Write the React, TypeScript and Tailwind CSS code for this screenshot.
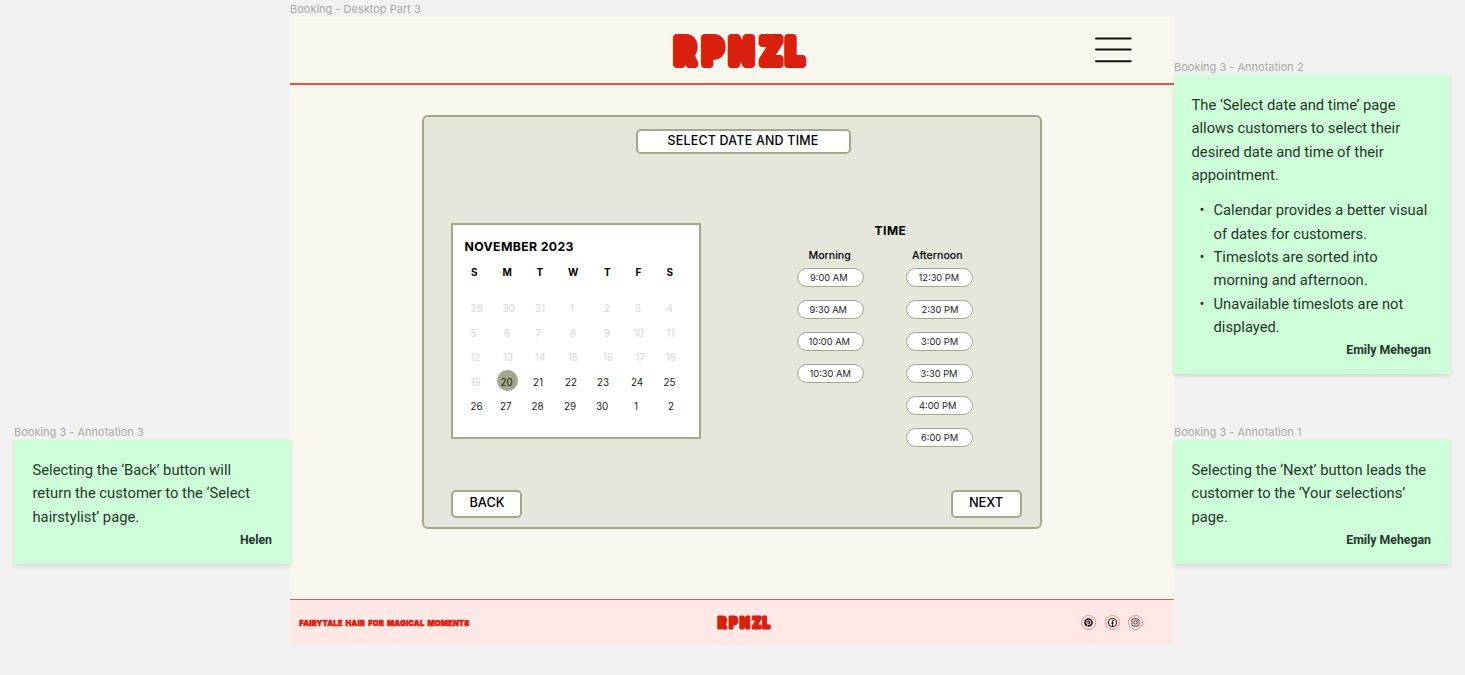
import React from "react";
import { FaPinterest, FaInstagram } from "react-icons/fa";
import { RiFacebookCircleLine } from "react-icons/ri";

type Cell = [text: string, inset: number];

const weekdays: Cell[] = [["S", 3], ["M", 2.5], ["T", 4.5], ["W", 4], ["T", 8], ["F", 7.5], ["S", 6.5]];

const weeks: Cell[][] = [
  [["29", 3], ["30", 3], ["31", 3.5], ["1", 6], ["2", 8.5], ["3", 7.5], ["4", 7]],
  [["5", 3], ["6", 4.5], ["7", 4], ["8", 6.5], ["9", 8.5], ["10", 6], ["11", 7]],
  [["12", 3], ["13", 3.5], ["14", 3.5], ["15", 4.5], ["16", 7.5], ["17", 8], ["18", 6]],
  [["19", 3], ["20", 1], ["21", 1.5], ["22", 1.5], ["23", 1.5], ["24", 3.5], ["25", 4]],
  [["26", 3], ["27", 0.5], ["28", 0], ["29", 0.5], ["30", 0.5], ["1", 6.5], ["2", 8.5]],
];

const morning: Cell[] = [["9:00 AM", 12], ["9:30 AM", 11.5], ["10:00 AM", 10.5], ["10:30 AM", 11.5]];
const afternoon: Cell[] = [["12:30 PM", 11.5], ["2:30 PM", 14.5], ["3:00 PM", 14], ["3:30 PM", 13.5], ["4:00 PM", 12], ["6:00 PM", 14]];

function Logo({ className }: { className: string }) {
  return (
    <svg viewBox="0 0 136 36" className={className} aria-label="RPNZL">
      <g transform="scale(0.88 1)">
        <text
          x="3 35 65.3 100.5 129.5"
          y="30.9"
          fontFamily="Inter, sans-serif"
          fontWeight="800"
          fontSize="35.5"
          fill="#d9200f"
          stroke="#d9200f"
          strokeWidth="8"
          strokeLinejoin="round"
        >
          RPNZL
        </text>
      </g>
    </svg>
  );
}

function FrameLabel({ children }: { children: React.ReactNode }) {
  return <div className="h-[17px] pt-px text-[11px] leading-[17px] whitespace-nowrap text-[#a9a9a9]">{children}</div>;
}

function Note({ label, author, className, children }: { label: string; author: string; className: string; children: React.ReactNode }) {
  return (
    <div className="relative">
      <FrameLabel>{label}</FrameLabel>
      <div className={`flex flex-col bg-[#cdffd8] pt-[19px] pr-[19px] font-['Roboto',sans-serif] text-[14.75px] leading-[23.35px] whitespace-nowrap text-[#2b332d] shadow-[0_2px_4px_rgba(0,0,0,0.13)] ${className}`}>
        {children}
        <div className="text-right text-[12.3px] font-bold">{author}</div>
      </div>
    </div>
  );
}

function SlotColumn({ title, slots, titleClass }: { title: string; slots: Cell[]; titleClass: string }) {
  return (
    <div className="w-[67px]">
      <div className={`h-[20px] text-[10.6px] leading-[14px] font-medium whitespace-nowrap ${titleClass}`}>{title}</div>
      <div className="flex flex-col gap-[13px]">
        {slots.map(([time, inset]) => (
          <div
            key={time}
            className="flex h-[19px] items-center rounded-full border-[1.5px] border-[#a3a88a] bg-white text-[9.3px] leading-none whitespace-nowrap text-[#222]"
            style={{ paddingLeft: inset }}
          >
            {time}
          </div>
        ))}
      </div>
    </div>
  );
}

function Calendar() {
  return (
    <div className="h-[216px] w-[250px] border-2 border-[#a3a88a] bg-white pl-[11px]">
      <div className="pt-[13px] pl-[0.5px] text-[12.3px] leading-[18px] font-bold tracking-[0.35px]">NOVEMBER 2023</div>
      <div className="grid grid-cols-[repeat(7,32px)] pt-[9px] pl-1 text-[10px] leading-[14px] font-bold">
        {weekdays.map(([d, inset], i) => (
          <div key={i} style={{ paddingLeft: inset }}>{d}</div>
        ))}
      </div>
      <div className="grid grid-cols-[repeat(7,32px)] pt-[18px] pl-[3.5px] text-[9.8px] leading-[24.5px]">
        {weeks.flatMap((week, w) =>
          week.map(([d, inset], i) => {
            const past = w < 3 || (w === 3 && i === 0);
            const selected = d === "20";
            return (
              <div key={`${w}-${i}`} className={`relative ${past ? "text-[#d6d6d6]" : "text-[#1c1c1c]"}`} style={{ paddingLeft: inset }}>
                {selected && <span className="absolute -top-px -left-[2.5px] size-[21px] rounded-full bg-[#a3a88a]" />}
                <span className="relative">{d}</span>
              </div>
            );
          }),
        )}
      </div>
    </div>
  );
}

function SocialIcon({ children }: { children: React.ReactNode }) {
  return <span className="flex size-[15px] items-center justify-center rounded-full border-[1.5px] border-[#f0897c] text-[#111]">{children}</span>;
}

export default function App() {
  return (
    <div className="grid h-[675px] w-[1465px] grid-cols-[290px_884px_291px] overflow-hidden bg-[#f2f2f2] font-['Inter',sans-serif] text-black">
      <aside className="relative z-10 pt-[423px] pl-[14px]">
        <Note label="Booking 3 - Annotation 3" author="Helen" className="h-[124px] w-[277px] pl-[18.5px]">
          <p>Selecting the ‘Back’ button will<br />return the customer to the ‘Select<br />hairstylist’ page.</p>
        </Note>
      </aside>

      <div>
        <FrameLabel>Booking - Desktop Part 3</FrameLabel>
        <div className="flex h-[628px] flex-col bg-[#faf7ee]">
          <header className="flex h-[68px] items-start justify-between border-b-2 border-[#e2553f] pr-[42px] pl-[382px]">
            <Logo className="mt-[16px] h-[36px] w-[136px] overflow-visible" />
            <svg viewBox="0 0 38 28" className="mt-[19px] h-[28px] w-[38px]" stroke="#111" strokeWidth="2" strokeLinecap="round">
              <path d="M2 2.4H36.7M2 13.6H36.7M2 25.2H36.7" />
            </svg>
          </header>

          <main className="flex-1 pt-[30px] pl-[132px]">
            <section className="flex h-[414px] w-[620px] flex-col rounded-[6px] border-2 border-[#a3a88a] bg-[#e4e7da]">
              <h1 className="mt-[12px] ml-[212px] flex h-[25px] w-[215px] items-center justify-center rounded-[5px] border-2 border-[#a3a88a] bg-white pr-px text-[12.4px] font-medium tracking-[0.25px] whitespace-nowrap">
                SELECT DATE AND TIME
              </h1>
              <div className="mt-[69px] flex pl-[27px]">
                <Calendar />
                <div className="ml-[96px] w-[176px]">
                  <div className="pl-[77.5px] text-[12px] leading-[16px] font-bold tracking-[0.5px]">TIME</div>
                  <div className="mt-[9px] flex justify-between">
                    <SlotColumn title="Morning" slots={morning} titleClass="pt-px pl-[11.5px]" />
                    <SlotColumn title="Afternoon" slots={afternoon} titleClass="pt-px pl-[6px]" />
                  </div>
                </div>
              </div>
              <div className="mt-auto mb-[9px] flex justify-between pr-[18px] pl-[27px] text-[12.8px] font-medium">
                <button className="h-[28px] w-[71px] rounded-[5px] border-2 border-[#a3a88a] bg-white pb-[2px] pl-px">BACK</button>
                <button className="h-[28px] w-[71px] rounded-[5px] border-2 border-[#a3a88a] bg-white pr-px pb-[2px]">NEXT</button>
              </div>
            </section>
          </main>

          <footer className="flex h-[46px] items-center border-t border-[#d9604f] bg-[#ffe9e7]">
            <svg viewBox="0 0 180 16" className="ml-[8px] h-[16px] w-[180px] overflow-visible">
              <text
                x="1.3"
                y="11.2"
                textLength="170"
                lengthAdjust="spacingAndGlyphs"
                wordSpacing="1.6"
                letterSpacing="0.15"
                fontFamily="Inter, sans-serif"
                fontWeight="900"
                fontSize="8"
                fill="#d9200f"
                stroke="#d9200f"
                strokeWidth="0.6"
                strokeLinejoin="round"
              >
                FAIRYTALE HAIR FOR MAGICAL MOMENTS
              </text>
            </svg>
            <Logo className="mt-[2px] ml-[239px] h-[14.5px] w-[54.5px] overflow-visible" />
            <div className="ml-auto flex gap-[8.5px] pr-[31px]">
              <SocialIcon><FaPinterest size={9} /></SocialIcon>
              <SocialIcon><RiFacebookCircleLine size={11} /></SocialIcon>
              <SocialIcon><FaInstagram size={9} /></SocialIcon>
            </div>
          </footer>
        </div>
      </div>

      <aside className="flex flex-col gap-[49px] pt-[58px]">
        <Note label="Booking 3 - Annotation 2" author="Emily Mehegan" className="h-[299px] w-[276px] pl-[17.5px]">
          <p>The ‘Select date and time’ page<br />allows customers to select their<br />desired date and time of their<br />appointment.</p>
          <ul className="mt-[12px] list-none">
            {["Calendar provides a better visual\nof dates for customers.", "Timeslots are sorted into\nmorning and afternoon.", "Unavailable timeslots are not\ndisplayed."].map((t) => (
              <li key={t} className="flex pl-[8px]">
                <span className="w-[14px]">•</span>
                <span className="whitespace-pre">{t}</span>
              </li>
            ))}
          </ul>
        </Note>
        <Note label="Booking 3 - Annotation 1" author="Emily Mehegan" className="h-[124px] w-[276px] pl-[17.5px]">
          <p>Selecting the ‘Next’ button leads the<br />customer to the ‘Your selections’<br />page.</p>
        </Note>
      </aside>
    </div>
  );
}
